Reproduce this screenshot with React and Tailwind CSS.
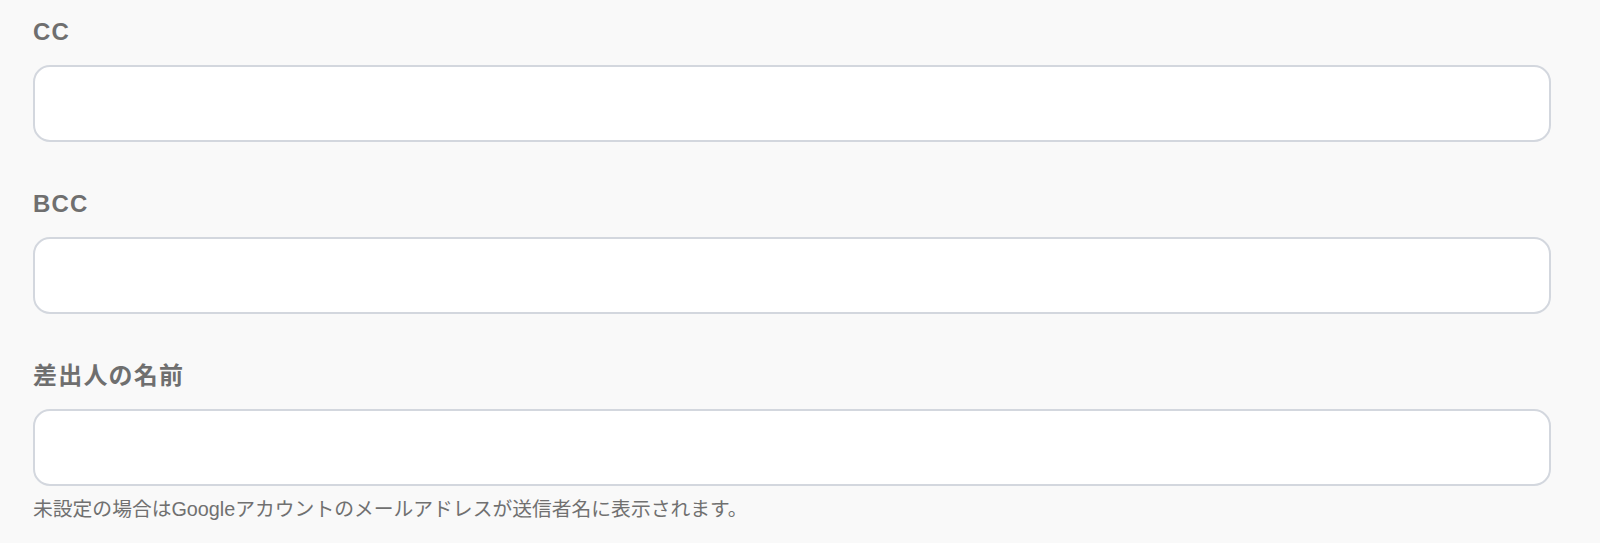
import React from "react";

const fields = [
  { label: "CC" },
  { label: "BCC" },
  { label: "差出人の名前", help: "未設定の場合はGoogleアカウントのメールアドレスが送信者名に表示されます。" },
];

const App = () => {
  return (
    <div
      className="min-h-screen w-full bg-[#f9f9f9] pl-[33px] pr-[49px] pt-[14px]"
      style={{ fontFamily: '"Liberation Sans", "Noto Sans CJK JP", sans-serif' }}
    >
      <form className="flex flex-col gap-[44px]">
        {fields.map((f) => (
          <div key={f.label} className="flex flex-col">
            <label className="text-[24px] leading-[36px] font-bold tracking-[0.05em] text-[#6f6f6f] mb-[15px]">
              {f.label}
            </label>
            <input
              type="text"
              className="h-[77px] w-full rounded-[17px] border-2 border-[#d3d7de] bg-white px-5 text-[22px] outline-none"
            />
            {f.help && (
              <p className="mt-2 text-[19.8px] leading-[30px] text-[#707070]">{f.help}</p>
            )}
          </div>
        ))}
      </form>
    </div>
  );
};

export default App;
